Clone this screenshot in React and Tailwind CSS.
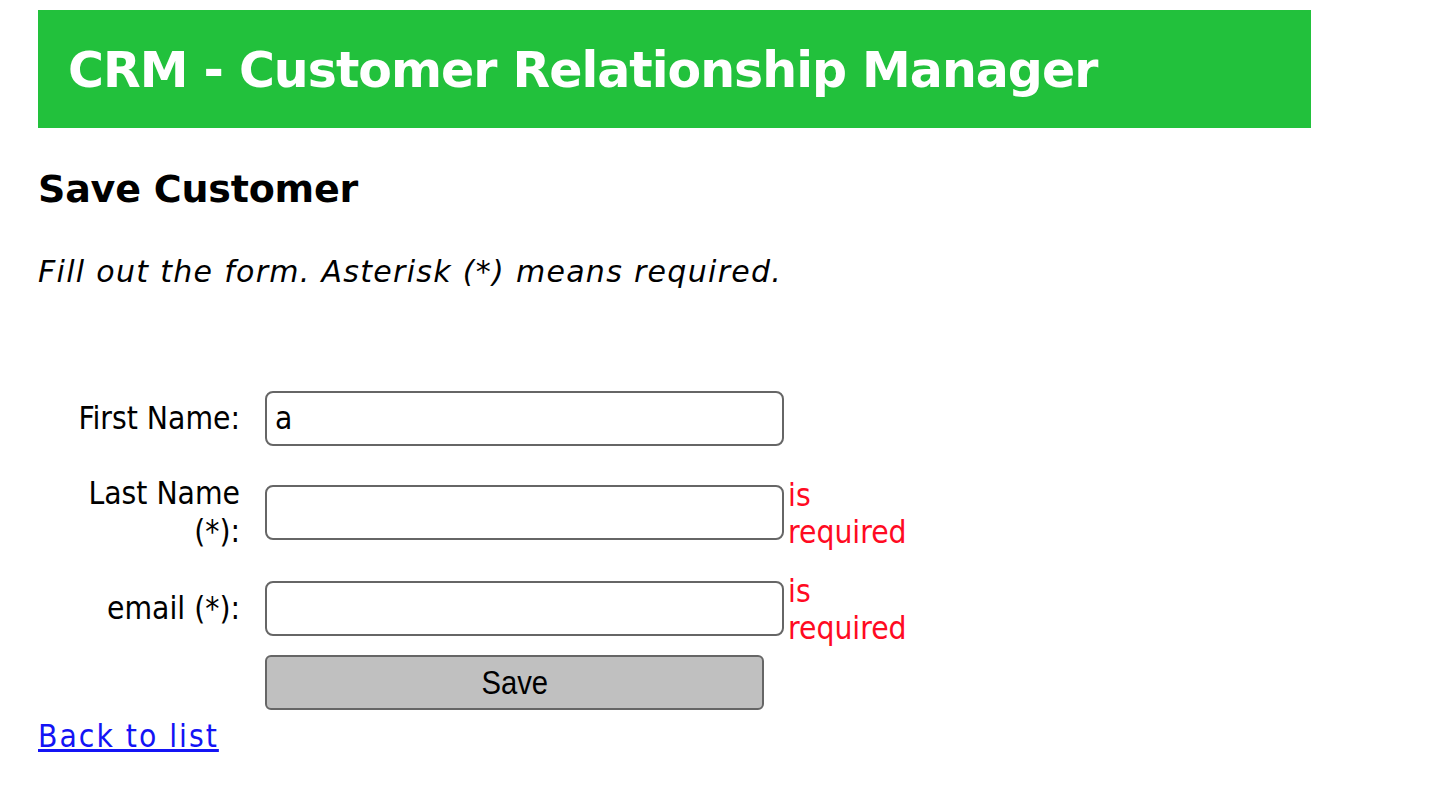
import React from "react";

const verdana = { fontFamily: "Verdana, 'DejaVu Sans', sans-serif" };
const tahoma = { fontFamily: "Tahoma, 'DejaVu Sans Condensed', 'DejaVu Sans', sans-serif" };

function Row({ label, value, error, className = "" }) {
  return (
    <div className={`flex items-center ${className}`}>
      <label className="w-[202px] mr-[25px] flex justify-end text-right leading-[38px]">
        {label}
      </label>
      <input
        defaultValue={value}
        style={tahoma}
        className="w-[519px] h-[55px] rounded-[8px] border-2 border-[#666] bg-white px-[8px] text-[31.5px] outline-none"
      />
      {error && (
        <span className="text-[#ff0a22] leading-[37px] w-[125px] pl-[4px] pt-[3px]">is required</span>
      )}
    </div>
  );
}

export default function App() {
  return (
    <div className="min-h-[800px] bg-white px-[38px] pt-[10px] text-black" style={verdana}>
      {/* header band */}
      <div className="w-[1273px] h-[118px] bg-[#22c13c] flex items-center pl-[30px]">
        <h1 className="text-white font-bold text-[49px] tracking-[-1px] leading-none pt-[2px]">
          CRM - Customer Relationship Manager
        </h1>
      </div>

      <h3 className="mt-[42px] font-bold text-[38px] tracking-[-0.2px] leading-none">Save Customer</h3>
      <p className="mt-[49px] italic text-[30px] tracking-[1.3px] leading-none">
        Fill out the form. Asterisk (*) means required.
      </p>

      <form className="mt-[104px] text-[31.5px]" style={tahoma}>
        <Row className="h-[54px]" label="First Name:" value="a" />
        <Row
          className="h-[76px] mt-[29px]"
          label={<span className="w-[155px] inline-block">Last Name (*):</span>}
          error
        />
        <Row className="h-[76px] mt-[20px]" label="email (*):" error />
        <div className="flex mt-[9px] pl-[227px]">
          <button
            type="button"
            className="w-[499px] h-[55px] rounded-[6px] border-2 border-[#666] bg-[#c0c0c0] text-[34px] text-black"
            style={{ fontFamily: "Arial, 'Liberation Sans', sans-serif" }}
          >
            <span className="inline-block scale-x-[0.86]">Save</span>
          </button>
        </div>
      </form>

      <a
        href="#"
        className="block mt-[8px] w-max text-[31.5px] tracking-[2px] text-[#1414f5] underline leading-[37px]"
        style={tahoma}
      >
        Back to list
      </a>
    </div>
  );
}
